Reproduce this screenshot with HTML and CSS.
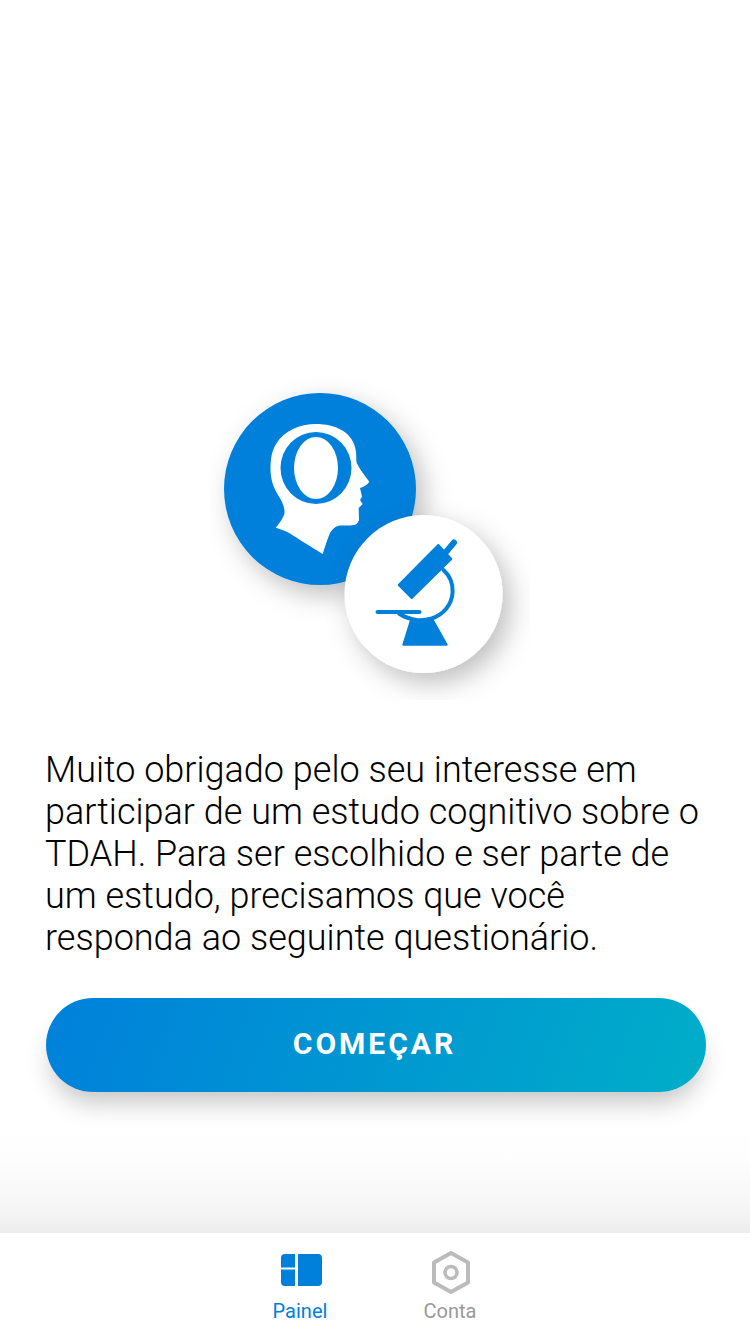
FILE: index.html
```html
<!DOCTYPE html>
<html lang="pt-BR">
   <head>
      <meta charset="utf-8">
      <meta name="viewport" content="width=device-width, initial-scale=1">
      <title>Painel</title>
      <link rel="stylesheet" href="styles.css">
   </head>
   <body>
      <main class="content">
         <svg class="hero" viewBox="210 380 320 320" width="320" height="320">
            <defs>
               <filter id="soft" x="-30%" y="-30%" width="170%" height="170%">
                  <feDropShadow dx="8" dy="10" stdDeviation="13" flood-color="#000" flood-opacity="0.25"/>
               </filter>
            </defs>
            <circle cx="320" cy="489" r="96" fill="#0080db" filter="url(#soft)"/>
            <path fill="#fff" d="M275.7 527.7 C279 524 282 520 284 515 C286 509 282 501 278 495 C273 487 270.5 478 270.5 469 C270.5 458 272 450 276.7 443 C284 431 300 424 316 424 C335 424 354 432 356 452 C356.5 456 356 460 356.7 463 C360 470 365 476 369.3 481.7 C367 485 364 487 360 488 L362 496.7 L360 500 L362.7 504 L358.7 508 L359 520 C358 523 356 525 353.3 525 C348 526 343 525 338.3 525.7 C334 527 332 530 330 533 C327 540 325 547 322.7 554 L300 540 C296 537 291 534 286.7 531.7 C283 530 279 528.5 275.7 527.7 Z"/>
            <ellipse cx="316" cy="468" rx="35.5" ry="36" fill="#0080db"/>
            <ellipse cx="316" cy="468" rx="22" ry="31" fill="#fff"/>
            <circle cx="423.5" cy="594" r="79" fill="#fff" filter="url(#soft)"/>
            <g fill="#0080db" stroke="#0080db" stroke-width="2" stroke-linejoin="round">
               <path d="M398.7 585 L438.3 545 L451.3 559 L411.7 598 Z"/>
               <path d="M411 620 L432.8 620 L446.7 644.7 L403.3 644.7 Z"/>
            </g>
            <g fill="none" stroke="#0080db" stroke-linecap="round">
               <path stroke-width="6" d="M446 552 L454 542.5"/>
               <path stroke-width="4" d="M377.5 612 L419.5 612"/>
               <path stroke-width="4" d="M443.5 570 C450 576 453 584 452.6 592 C452 605 443 615 431.7 618.5 C426 620 421 620.5 416.7 620 C410 619 404 617 399 613.5"/>
            </g>
         </svg>
         <p class="intro">Muito obrigado pelo seu interesse em participar de um estudo cognitivo sobre o TDAH. Para ser escolhido e ser parte de um estudo, precisamos que você responda ao seguinte questionário.</p>
         <button class="start" type="button">COMEÇAR</button>
      </main>
      <div class="fade"></div>
      <nav class="tabs">
         <a class="tab tab-active" href="#">
            <svg class="tab-icon" viewBox="0 0 41 32" width="41" height="32">
               <path fill="#0080db" d="M4 0 H14 V13.5 H0 V4 A4 4 0 0 1 4 0 Z M0 15.5 H14 V32 H4 A4 4 0 0 1 0 28 Z M17 0 H37 A4 4 0 0 1 41 4 V28 A4 4 0 0 1 37 32 H17 Z"/>
            </svg>
            <span>Painel</span>
         </a>
         <a class="tab" href="#">
            <svg class="tab-icon" viewBox="0 0 38 43" width="38" height="43">
               <path fill="none" stroke="#bbb" stroke-width="4" stroke-linejoin="round" d="M19 2 L36 11.5 V31.5 L19 41 L2 31.5 V11.5 Z"/>
               <circle cx="19" cy="21.5" r="6" fill="none" stroke="#bbb" stroke-width="3.5"/>
            </svg>
            <span>Conta</span>
         </a>
      </nav>
   </body>
</html>
```

FILE: styles.css
```css
* {
   box-sizing: border-box;
}
html, body {
   height: 100%;
}
body {
   display: flex;
   flex-direction: column;
   margin: 0;
   background-color: white;
   color: black;
   font-family: Roboto, "Liberation Sans", sans-serif;
}
.content {
   flex: 1;
   padding: 380px 44px 0 45px;
}
.hero {
   display: block;
   margin: 0 0 49px 165px;
}
.intro {
   margin: 0 0 39px;
   font-size: 36px;
   font-weight: 300;
   line-height: 42px;
}
.start {
   display: block;
   width: 660px;
   height: 94px;
   margin-left: 1px;
   padding: 0 3px 3px 0;
   border: 0;
   border-radius: 47px;
   background: linear-gradient(110deg, #0080db, #00aec8);
   box-shadow: 0 16px 26px -6px rgba(0, 0, 0, 0.24);
   color: white;
   font-family: inherit;
   font-size: 30px;
   font-weight: 700;
   letter-spacing: 3px;
}
.fade {
   height: 103px;
   background: linear-gradient(to bottom, #fff, #fdfdfd 30%, #f9f9f9 60%, #f3f3f3 85%, #ececec);
}
.tabs {
   display: flex;
   justify-content: center;
   height: 101px;
   background-color: white;
}
.tab {
   display: flex;
   flex-direction: column;
   align-items: center;
   width: 150px;
   color: #999;
   font-size: 20px;
   text-decoration: none;
}
.tab-active {
   color: #0080db;
}
.tab-icon {
   display: block;
   flex: none;
   margin-left: 2px;
}
.tab-active .tab-icon {
   margin-top: 21px;
   margin-bottom: 13px;
}
.tab:not(.tab-active) .tab-icon {
   margin-top: 18px;
   margin-bottom: 5px;
}
```
